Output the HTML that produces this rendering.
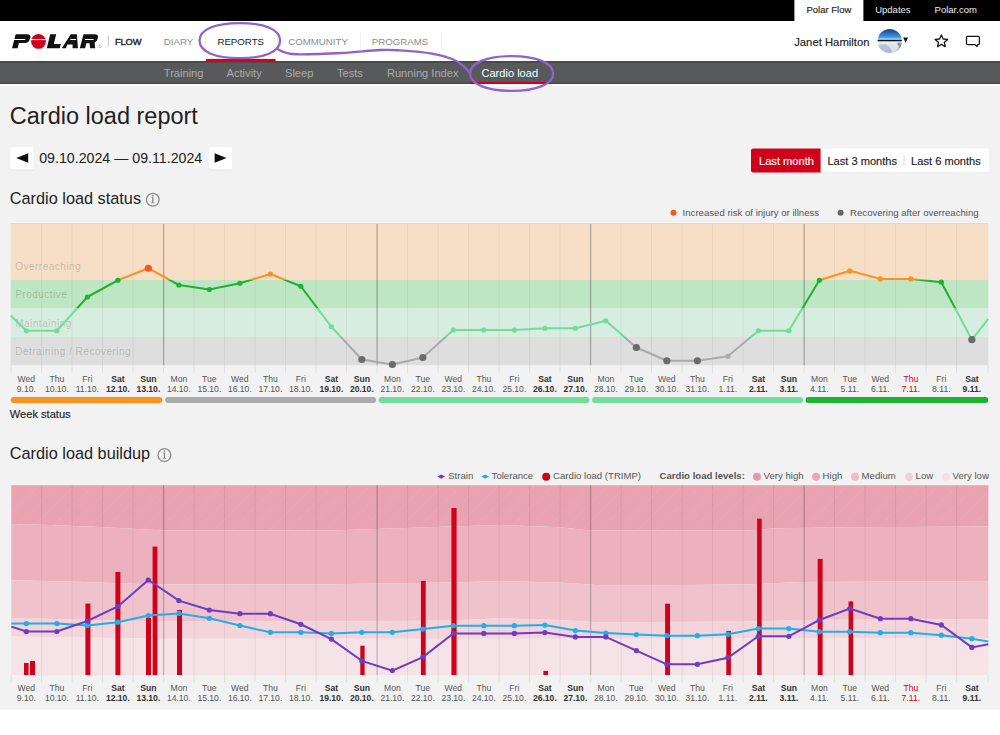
<!DOCTYPE html>
<html><head><meta charset="utf-8">
<style>
html,body{margin:0;padding:0;}
body{width:1000px;height:735px;overflow:hidden;background:#fff;}
svg{display:block;}
</style></head><body>
<svg width="1000" height="735" viewBox="0 0 1000 735" font-family="Liberation Sans, sans-serif">
<rect x="0" y="0" width="1000" height="21" fill="#000"/>
<rect x="794.4" y="0" width="69" height="21" fill="#fff"/>
<text x="806.5" y="12.8" font-size="9.5" fill="#222" font-weight="normal" text-anchor="start" stroke="#222" stroke-width="0.15" >Polar Flow</text>
<text x="875.2" y="12.8" font-size="9.5" fill="#eee" font-weight="normal" text-anchor="start" >Updates</text>
<text x="934.6" y="12.8" font-size="9.5" fill="#eee" font-weight="normal" text-anchor="start" >Polar.com</text>
<g fill="#111">
<path d="M15.7,34.3 L26.8,34.3 Q31.2,34.3 30.3,37.8 L30.1,38.6 Q29,43.1 24.6,43.1 L18.9,43.1 L17.6,48.2 L12,48.2 Z"/>
<path d="M50.2,34.3 L56.2,34.3 L53.8,43.9 L60.8,43.9 L59.8,48.2 L46.8,48.2 Z"/>
<path d="M70.8,34.3 L76.9,34.3 L77.9,48.2 L72.6,48.2 L72.6,44.4 L67.4,44.4 L65.8,48.2 L61.8,48.2 Z"/>
<path d="M83.5,34.3 L94.4,34.3 Q98.8,34.3 97.9,37.8 L97.7,38.6 Q97,41.6 94.6,42.6 L95.2,48.2 L90,48.2 L89.6,43.2 L86.3,43.2 L85.1,48.2 L79.8,48.2 Z"/>
</g>
<g fill="#fff"><rect x="13" y="39" width="12.3" height="1"/><rect x="70.3" y="39" width="5.8" height="1"/><rect x="85" y="39" width="8.6" height="1"/></g>
<circle cx="38.5" cy="41.4" r="7.4" fill="#d0021b"/>
<rect x="30" y="39" width="17" height="1.1" fill="#fff"/>
<circle cx="100.1" cy="46.4" r="1.3" fill="none" stroke="#999" stroke-width="0.6"/>
<line x1="108.3" y1="35.5" x2="108.3" y2="46.5" stroke="#c4c4c4" stroke-width="1"/>
<text x="114.9" y="44.9" font-size="9.3" fill="#2a2a2a" stroke="#2a2a2a" stroke-width="0.45" letter-spacing="-0.1">FLOW</text>
<text x="163.8" y="45.2" font-size="9.7" fill="#8c8c8c" font-weight="normal" text-anchor="start" >DIARY</text>
<text x="217.4" y="45.2" font-size="9.7" fill="#222" font-weight="normal" text-anchor="start" >REPORTS</text>
<text x="288.2" y="45.2" font-size="9.7" fill="#8c8c8c" font-weight="normal" text-anchor="start" >COMMUNITY</text>
<text x="371.8" y="45.2" font-size="9.7" fill="#8c8c8c" font-weight="normal" text-anchor="start" >PROGRAMS</text>
<rect x="205" y="33" width="1" height="17" fill="#efefef"/>
<rect x="277" y="33" width="1" height="17" fill="#efefef"/>
<rect x="359.8" y="33" width="1" height="17" fill="#efefef"/>
<rect x="440.8" y="33" width="1" height="17" fill="#efefef"/>
<rect x="206" y="58.9" width="69.6" height="2.1" fill="#d0021b"/>
<text x="794.2" y="45.8" font-size="11.3" fill="#222" font-weight="normal" text-anchor="start" stroke="#222" stroke-width="0.15" >Janet Hamilton</text>
<defs><clipPath id="av"><circle cx="889.75" cy="41" r="12.1"/></clipPath><linearGradient id="sky" x1="0" y1="28.9" x2="0" y2="40" gradientUnits="userSpaceOnUse"><stop offset="0" stop-color="#173f78"/><stop offset="0.45" stop-color="#2a74c0"/><stop offset="0.75" stop-color="#3d9ae0"/><stop offset="1" stop-color="#d8ecf8"/></linearGradient><linearGradient id="snow" x1="0" y1="41" x2="0" y2="53" gradientUnits="userSpaceOnUse"><stop offset="0" stop-color="#f2f5f9"/><stop offset="1" stop-color="#b9c6d6"/></linearGradient></defs>
<g clip-path="url(#av)"><rect x="877" y="28" width="26" height="12.5" fill="url(#sky)"/><rect x="877" y="41" width="26" height="13" fill="url(#snow)"/><path d="M877,45 L886,44 L893,50 L890,54 L877,54 Z" fill="#aab8cc" fill-opacity="0.7"/><path d="M896,43 L903,42.5 L903,54 L894,54 L899,48 Z" fill="#5f7590" fill-opacity="0.75"/><path d="M889,46 L897,42.5 L899,47 L893,53 Z" fill="#dfe6ef" fill-opacity="0.8"/><rect x="877" y="39.8" width="26" height="1.5" fill="#111"/></g>
<path d="M903.2,37.4 L908,37.4 L905.6,42.7 Z" fill="#111"/>
<path d="M941.4,34.9 L943.2,39 L947.7,39.4 L944.3,42.3 L945.3,46.7 L941.4,44.4 L937.5,46.7 L938.5,42.3 L935.1,39.4 L939.6,39 Z" fill="none" stroke="#111" stroke-width="1.3" stroke-linejoin="round"/>
<path d="M967.6,36.4 L978.3,36.4 Q979.4,36.4 979.4,37.5 L979.4,43.5 Q979.4,44.6 978.3,44.6 L977.7,44.6 L977,46.4 L974.8,44.6 L967.6,44.6 Q966.5,44.6 966.5,43.5 L966.5,37.5 Q966.5,36.4 967.6,36.4 Z" fill="none" stroke="#111" stroke-width="1.25" stroke-linejoin="round"/>
<rect x="0" y="61" width="1000" height="23" fill="#58595b"/>
<rect x="0" y="61" width="1000" height="1.8" fill="#48494a"/>
<rect x="0" y="82.8" width="1000" height="1.3" fill="#444546"/>
<text x="163.8" y="76.8" font-size="11.1" fill="#ababab" font-weight="normal" text-anchor="start" >Training</text>
<text x="226.6" y="76.8" font-size="11.1" fill="#ababab" font-weight="normal" text-anchor="start" >Activity</text>
<text x="285" y="76.8" font-size="11.1" fill="#ababab" font-weight="normal" text-anchor="start" >Sleep</text>
<text x="337" y="76.8" font-size="11.1" fill="#ababab" font-weight="normal" text-anchor="start" >Tests</text>
<text x="386.9" y="76.8" font-size="11.1" fill="#ababab" font-weight="normal" text-anchor="start" >Running Index</text>
<text x="481.4" y="76.8" font-size="11.1" fill="#fff" font-weight="normal" text-anchor="start" >Cardio load</text>
<rect x="470.4" y="81.9" width="79.2" height="2.5" fill="#d0021b"/>
<rect x="0" y="85.8" width="1000" height="623.7" fill="#f2f2f2"/>
<rect x="0" y="84.1" width="1000" height="1.7" fill="#fff"/>
<text x="9.8" y="123.8" font-size="23.5" fill="#222" font-weight="normal" text-anchor="start" >Cardio load report</text>
<rect x="10.2" y="147.8" width="23.4" height="22.6" rx="2" fill="#000" fill-opacity="0.06"/>
<rect x="10.2" y="147" width="23.4" height="22.6" rx="2" fill="#fff"/>
<rect x="209" y="147.8" width="23.4" height="22.6" rx="2" fill="#000" fill-opacity="0.06"/>
<rect x="209" y="147" width="23.4" height="22.6" rx="2" fill="#fff"/>
<path d="M16.2,158 L28.2,153.2 L28.2,162.8 Z" fill="#111"/>
<path d="M226.6,158 L214.6,153.2 L214.6,162.8 Z" fill="#111"/>
<text x="39.2" y="163.2" font-size="14.2" fill="#222" font-weight="normal" text-anchor="start" >09.10.2024 — 09.11.2024</text>
<rect x="751" y="149.4" width="238.1" height="23.9" rx="2" fill="#000" fill-opacity="0.06"/>
<rect x="751" y="148.6" width="238.1" height="23.9" rx="2" fill="#fff"/>
<path d="M753,148.6 L820.6,148.6 L820.6,172.5 L753,172.5 Q751,172.5 751,170.5 L751,150.6 Q751,148.6 753,148.6 Z" fill="#d0021b"/>
<rect x="903.5" y="155" width="1" height="11" fill="#ddd"/>
<text x="759" y="164.7" font-size="11.1" fill="#fff" font-weight="normal" text-anchor="start" stroke="#fff" stroke-width="0.15" >Last month</text>
<text x="827.4" y="164.7" font-size="11.1" fill="#222" font-weight="normal" text-anchor="start" stroke="#222" stroke-width="0.15" >Last 3 months</text>
<text x="911.1" y="164.7" font-size="11.1" fill="#222" font-weight="normal" text-anchor="start" stroke="#222" stroke-width="0.15" >Last 6 months</text>
<text x="9.8" y="204" font-size="16.3" fill="#222" font-weight="normal" text-anchor="start" >Cardio load status</text>
<g transform="translate(152.8,199.7)"><circle cx="0" cy="0" r="6.4" fill="none" stroke="#8c8c8c" stroke-width="1.3"/><circle cx="0" cy="-4" r="0.85" fill="#8c8c8c"/><path d="M-1.3,-2.5 L0.7,-2.5 L0.7,2.9 L1.6,2.9 L1.6,3.6 L-1.7,3.6 L-1.7,2.9 L-0.7,2.9 L-0.7,-1.8 L-1.3,-1.8 Z" fill="#8c8c8c"/></g>
<text x="9.8" y="417.5" font-size="11.1" fill="#222" font-weight="normal" text-anchor="start" stroke="#222" stroke-width="0.15" >Week status</text>
<text x="9.8" y="459.3" font-size="16.3" fill="#222" font-weight="normal" text-anchor="start" >Cardio load buildup</text>
<g transform="translate(164.4,455.1)"><circle cx="0" cy="0" r="6.4" fill="none" stroke="#8c8c8c" stroke-width="1.3"/><circle cx="0" cy="-4" r="0.85" fill="#8c8c8c"/><path d="M-1.3,-2.5 L0.7,-2.5 L0.7,2.9 L1.6,2.9 L1.6,3.6 L-1.7,3.6 L-1.7,2.9 L-0.7,2.9 L-0.7,-1.8 L-1.3,-1.8 Z" fill="#8c8c8c"/></g>
<circle cx="673.5" cy="212.8" r="3" fill="#f15a24"/><circle cx="840.6" cy="212.8" r="3" fill="#666"/>
<text x="682.6" y="215.9" font-size="9.6" fill="#555" font-weight="normal" text-anchor="start" >Increased risk of injury or illness</text>
<text x="850.1" y="215.9" font-size="9.6" fill="#555" font-weight="normal" text-anchor="start" >Recovering after overreaching</text>
<path d="M441.2,474.4 L445.1,476.6 L441.2,478.8 L437.3,476.6 Z" fill="#6f3cbf"/>
<path d="M485.2,474.4 L489.1,476.6 L485.2,478.8 L481.3,476.6 Z" fill="#22aee6"/>
<circle cx="546.2" cy="476.8" r="4" fill="#d0021b"/>
<circle cx="757" cy="476.8" r="4" fill="#e59aaa"/>
<circle cx="816" cy="476.8" r="4" fill="#eaa9b7"/>
<circle cx="855" cy="476.8" r="4" fill="#eebcc6"/>
<circle cx="909" cy="476.8" r="4" fill="#f1d0d7"/>
<circle cx="946" cy="476.8" r="4" fill="#f4e0e4"/>
<text x="448.2" y="478.7" font-size="9.6" fill="#555" font-weight="normal" text-anchor="start" >Strain</text>
<text x="491.6" y="478.7" font-size="9.6" fill="#555" font-weight="normal" text-anchor="start" >Tolerance</text>
<text x="553.1" y="478.7" font-size="9.6" fill="#555" font-weight="normal" text-anchor="start" >Cardio load (TRIMP)</text>
<text x="659.6" y="478.7" font-size="9.6" fill="#555" font-weight="bold" text-anchor="start" >Cardio load levels:</text>
<text x="763.6" y="478.7" font-size="9.6" fill="#555" font-weight="normal" text-anchor="start" >Very high</text>
<text x="822.6" y="478.7" font-size="9.6" fill="#555" font-weight="normal" text-anchor="start" >High</text>
<text x="861.6" y="478.7" font-size="9.6" fill="#555" font-weight="normal" text-anchor="start" >Medium</text>
<text x="915.6" y="478.7" font-size="9.6" fill="#555" font-weight="normal" text-anchor="start" >Low</text>
<text x="952.6" y="478.7" font-size="9.6" fill="#555" font-weight="normal" text-anchor="start" >Very low</text>
<defs>
<clipPath id="zo"><rect x="0" y="0" width="1000" height="280.0"/></clipPath>
<clipPath id="zp"><rect x="0" y="280.0" width="1000" height="28.5"/></clipPath>
<clipPath id="zm"><rect x="0" y="308.5" width="1000" height="28.5"/></clipPath>
<clipPath id="zd"><rect x="0" y="337.0" width="1000" height="83.0"/></clipPath>
</defs>
<rect x="10.7" y="222" width="977.5999999999999" height="1" fill="#f8f8f8"/>
<rect x="10.7" y="223" width="977.5999999999999" height="1" fill="#dbd8d2"/>
<rect x="10.7" y="224.0" width="977.5999999999999" height="56.0" fill="#f6dfc6"/>
<rect x="10.7" y="280.0" width="977.5999999999999" height="28.5" fill="#bee6c2"/>
<rect x="10.7" y="308.5" width="977.5999999999999" height="28.5" fill="#d7eddf"/>
<rect x="10.7" y="337.0" width="977.5999999999999" height="28.19999999999999" fill="#dedede"/>
<text x="15.2" y="270.1" font-size="10" fill="#000" font-weight="normal" text-anchor="start" fill-opacity="0.2" letter-spacing="0.5">Overreaching</text>
<text x="15.2" y="298.1" font-size="10" fill="#000" font-weight="normal" text-anchor="start" fill-opacity="0.2" letter-spacing="0.5">Productive</text>
<text x="15.2" y="326.6" font-size="10" fill="#000" font-weight="normal" text-anchor="start" fill-opacity="0.2" letter-spacing="0.5">Maintaining</text>
<text x="15.2" y="355.1" font-size="10" fill="#000" font-weight="normal" text-anchor="start" fill-opacity="0.2" letter-spacing="0.5">Detraining / Recovering</text>
<line x1="11.10" y1="365.2" x2="11.10" y2="372.7" stroke="#000" stroke-opacity="0.08"/>
<line x1="41.60" y1="365.2" x2="41.60" y2="372.7" stroke="#000" stroke-opacity="0.08"/>
<line x1="41.60" y1="224.0" x2="41.60" y2="365.2" stroke="#000" stroke-opacity="0.06"/>
<line x1="72.10" y1="365.2" x2="72.10" y2="372.7" stroke="#000" stroke-opacity="0.08"/>
<line x1="72.10" y1="224.0" x2="72.10" y2="365.2" stroke="#000" stroke-opacity="0.06"/>
<line x1="102.60" y1="365.2" x2="102.60" y2="372.7" stroke="#000" stroke-opacity="0.08"/>
<line x1="102.60" y1="224.0" x2="102.60" y2="365.2" stroke="#000" stroke-opacity="0.06"/>
<line x1="133.10" y1="365.2" x2="133.10" y2="372.7" stroke="#000" stroke-opacity="0.08"/>
<line x1="133.10" y1="224.0" x2="133.10" y2="365.2" stroke="#000" stroke-opacity="0.06"/>
<line x1="163.60" y1="365.2" x2="163.60" y2="372.7" stroke="#000" stroke-opacity="0.08"/>
<line x1="163.60" y1="224.0" x2="163.60" y2="365.2" stroke="#000" stroke-opacity="0.27" stroke-width="1.3"/>
<line x1="194.10" y1="365.2" x2="194.10" y2="372.7" stroke="#000" stroke-opacity="0.08"/>
<line x1="194.10" y1="224.0" x2="194.10" y2="365.2" stroke="#000" stroke-opacity="0.06"/>
<line x1="224.60" y1="365.2" x2="224.60" y2="372.7" stroke="#000" stroke-opacity="0.08"/>
<line x1="224.60" y1="224.0" x2="224.60" y2="365.2" stroke="#000" stroke-opacity="0.06"/>
<line x1="255.10" y1="365.2" x2="255.10" y2="372.7" stroke="#000" stroke-opacity="0.08"/>
<line x1="255.10" y1="224.0" x2="255.10" y2="365.2" stroke="#000" stroke-opacity="0.06"/>
<line x1="285.60" y1="365.2" x2="285.60" y2="372.7" stroke="#000" stroke-opacity="0.08"/>
<line x1="285.60" y1="224.0" x2="285.60" y2="365.2" stroke="#000" stroke-opacity="0.06"/>
<line x1="316.10" y1="365.2" x2="316.10" y2="372.7" stroke="#000" stroke-opacity="0.08"/>
<line x1="316.10" y1="224.0" x2="316.10" y2="365.2" stroke="#000" stroke-opacity="0.06"/>
<line x1="346.60" y1="365.2" x2="346.60" y2="372.7" stroke="#000" stroke-opacity="0.08"/>
<line x1="346.60" y1="224.0" x2="346.60" y2="365.2" stroke="#000" stroke-opacity="0.06"/>
<line x1="377.10" y1="365.2" x2="377.10" y2="372.7" stroke="#000" stroke-opacity="0.08"/>
<line x1="377.10" y1="224.0" x2="377.10" y2="365.2" stroke="#000" stroke-opacity="0.27" stroke-width="1.3"/>
<line x1="407.60" y1="365.2" x2="407.60" y2="372.7" stroke="#000" stroke-opacity="0.08"/>
<line x1="407.60" y1="224.0" x2="407.60" y2="365.2" stroke="#000" stroke-opacity="0.06"/>
<line x1="438.10" y1="365.2" x2="438.10" y2="372.7" stroke="#000" stroke-opacity="0.08"/>
<line x1="438.10" y1="224.0" x2="438.10" y2="365.2" stroke="#000" stroke-opacity="0.06"/>
<line x1="468.60" y1="365.2" x2="468.60" y2="372.7" stroke="#000" stroke-opacity="0.08"/>
<line x1="468.60" y1="224.0" x2="468.60" y2="365.2" stroke="#000" stroke-opacity="0.06"/>
<line x1="499.10" y1="365.2" x2="499.10" y2="372.7" stroke="#000" stroke-opacity="0.08"/>
<line x1="499.10" y1="224.0" x2="499.10" y2="365.2" stroke="#000" stroke-opacity="0.06"/>
<line x1="529.60" y1="365.2" x2="529.60" y2="372.7" stroke="#000" stroke-opacity="0.08"/>
<line x1="529.60" y1="224.0" x2="529.60" y2="365.2" stroke="#000" stroke-opacity="0.06"/>
<line x1="560.10" y1="365.2" x2="560.10" y2="372.7" stroke="#000" stroke-opacity="0.08"/>
<line x1="560.10" y1="224.0" x2="560.10" y2="365.2" stroke="#000" stroke-opacity="0.06"/>
<line x1="590.60" y1="365.2" x2="590.60" y2="372.7" stroke="#000" stroke-opacity="0.08"/>
<line x1="590.60" y1="224.0" x2="590.60" y2="365.2" stroke="#000" stroke-opacity="0.27" stroke-width="1.3"/>
<line x1="621.10" y1="365.2" x2="621.10" y2="372.7" stroke="#000" stroke-opacity="0.08"/>
<line x1="621.10" y1="224.0" x2="621.10" y2="365.2" stroke="#000" stroke-opacity="0.06"/>
<line x1="651.60" y1="365.2" x2="651.60" y2="372.7" stroke="#000" stroke-opacity="0.08"/>
<line x1="651.60" y1="224.0" x2="651.60" y2="365.2" stroke="#000" stroke-opacity="0.06"/>
<line x1="682.10" y1="365.2" x2="682.10" y2="372.7" stroke="#000" stroke-opacity="0.08"/>
<line x1="682.10" y1="224.0" x2="682.10" y2="365.2" stroke="#000" stroke-opacity="0.06"/>
<line x1="712.60" y1="365.2" x2="712.60" y2="372.7" stroke="#000" stroke-opacity="0.08"/>
<line x1="712.60" y1="224.0" x2="712.60" y2="365.2" stroke="#000" stroke-opacity="0.06"/>
<line x1="743.10" y1="365.2" x2="743.10" y2="372.7" stroke="#000" stroke-opacity="0.08"/>
<line x1="743.10" y1="224.0" x2="743.10" y2="365.2" stroke="#000" stroke-opacity="0.06"/>
<line x1="773.60" y1="365.2" x2="773.60" y2="372.7" stroke="#000" stroke-opacity="0.08"/>
<line x1="773.60" y1="224.0" x2="773.60" y2="365.2" stroke="#000" stroke-opacity="0.06"/>
<line x1="804.10" y1="365.2" x2="804.10" y2="372.7" stroke="#000" stroke-opacity="0.08"/>
<line x1="804.10" y1="224.0" x2="804.10" y2="365.2" stroke="#000" stroke-opacity="0.27" stroke-width="1.3"/>
<line x1="834.60" y1="365.2" x2="834.60" y2="372.7" stroke="#000" stroke-opacity="0.08"/>
<line x1="834.60" y1="224.0" x2="834.60" y2="365.2" stroke="#000" stroke-opacity="0.06"/>
<line x1="865.10" y1="365.2" x2="865.10" y2="372.7" stroke="#000" stroke-opacity="0.08"/>
<line x1="865.10" y1="224.0" x2="865.10" y2="365.2" stroke="#000" stroke-opacity="0.06"/>
<line x1="895.60" y1="365.2" x2="895.60" y2="372.7" stroke="#000" stroke-opacity="0.08"/>
<line x1="895.60" y1="224.0" x2="895.60" y2="365.2" stroke="#000" stroke-opacity="0.06"/>
<line x1="926.10" y1="365.2" x2="926.10" y2="372.7" stroke="#000" stroke-opacity="0.08"/>
<line x1="926.10" y1="224.0" x2="926.10" y2="365.2" stroke="#000" stroke-opacity="0.06"/>
<line x1="956.60" y1="365.2" x2="956.60" y2="372.7" stroke="#000" stroke-opacity="0.08"/>
<line x1="956.60" y1="224.0" x2="956.60" y2="365.2" stroke="#000" stroke-opacity="0.06"/>
<line x1="988.10" y1="365.2" x2="988.10" y2="372.7" stroke="#000" stroke-opacity="0.08"/>
<polyline points="10.70,315.50 26.35,330.75 56.85,330.75 87.35,297.00 117.85,280.25 148.35,268.25 178.85,285.00 209.35,289.50 239.85,283.25 270.35,274.00 300.85,286.25 331.35,326.75 361.85,359.50 392.35,364.50 422.85,357.50 453.35,330.00 483.85,330.00 514.35,330.00 544.85,328.25 575.35,328.25 605.85,320.75 636.35,347.50 666.85,360.75 697.35,360.75 727.85,356.25 758.35,330.75 788.85,330.75 819.35,280.30 849.85,270.80 880.35,278.90 910.85,278.90 941.35,282.20 971.85,339.70 988.30,318.80" fill="none" stroke="#f7931e" stroke-width="2" stroke-linejoin="round" clip-path="url(#zo)"/>
<polyline points="10.70,315.50 26.35,330.75 56.85,330.75 87.35,297.00 117.85,280.25 148.35,268.25 178.85,285.00 209.35,289.50 239.85,283.25 270.35,274.00 300.85,286.25 331.35,326.75 361.85,359.50 392.35,364.50 422.85,357.50 453.35,330.00 483.85,330.00 514.35,330.00 544.85,328.25 575.35,328.25 605.85,320.75 636.35,347.50 666.85,360.75 697.35,360.75 727.85,356.25 758.35,330.75 788.85,330.75 819.35,280.30 849.85,270.80 880.35,278.90 910.85,278.90 941.35,282.20 971.85,339.70 988.30,318.80" fill="none" stroke="#1fb131" stroke-width="2" stroke-linejoin="round" clip-path="url(#zp)"/>
<polyline points="10.70,315.50 26.35,330.75 56.85,330.75 87.35,297.00 117.85,280.25 148.35,268.25 178.85,285.00 209.35,289.50 239.85,283.25 270.35,274.00 300.85,286.25 331.35,326.75 361.85,359.50 392.35,364.50 422.85,357.50 453.35,330.00 483.85,330.00 514.35,330.00 544.85,328.25 575.35,328.25 605.85,320.75 636.35,347.50 666.85,360.75 697.35,360.75 727.85,356.25 758.35,330.75 788.85,330.75 819.35,280.30 849.85,270.80 880.35,278.90 910.85,278.90 941.35,282.20 971.85,339.70 988.30,318.80" fill="none" stroke="#71dc9d" stroke-width="2" stroke-linejoin="round" clip-path="url(#zm)"/>
<polyline points="10.70,315.50 26.35,330.75 56.85,330.75 87.35,297.00 117.85,280.25 148.35,268.25 178.85,285.00 209.35,289.50 239.85,283.25 270.35,274.00 300.85,286.25 331.35,326.75 361.85,359.50 392.35,364.50 422.85,357.50 453.35,330.00 483.85,330.00 514.35,330.00 544.85,328.25 575.35,328.25 605.85,320.75 636.35,347.50 666.85,360.75 697.35,360.75 727.85,356.25 758.35,330.75 788.85,330.75 819.35,280.30 849.85,270.80 880.35,278.90 910.85,278.90 941.35,282.20 971.85,339.70 988.30,318.80" fill="none" stroke="#aaaaaa" stroke-width="2" stroke-linejoin="round" clip-path="url(#zd)"/>
<circle cx="26.35" cy="330.75" r="2.6" fill="#71dc9d"/>
<circle cx="56.85" cy="330.75" r="2.6" fill="#71dc9d"/>
<circle cx="87.35" cy="297" r="2.6" fill="#1fb131"/>
<circle cx="117.85" cy="280.25" r="2.6" fill="#1fb131"/>
<circle cx="148.35" cy="268.25" r="3.6" fill="#f15a24"/>
<circle cx="178.85" cy="285" r="2.6" fill="#1fb131"/>
<circle cx="209.35" cy="289.5" r="2.6" fill="#1fb131"/>
<circle cx="239.85" cy="283.25" r="2.6" fill="#1fb131"/>
<circle cx="270.35" cy="274" r="2.6" fill="#f7931e"/>
<circle cx="300.85" cy="286.25" r="2.6" fill="#1fb131"/>
<circle cx="331.35" cy="326.75" r="2.6" fill="#71dc9d"/>
<circle cx="361.85" cy="359.5" r="3.6" fill="#6b6b6b"/>
<circle cx="392.35" cy="364.5" r="3.6" fill="#6b6b6b"/>
<circle cx="422.85" cy="357.5" r="3.6" fill="#6b6b6b"/>
<circle cx="453.35" cy="330" r="2.6" fill="#71dc9d"/>
<circle cx="483.85" cy="330" r="2.6" fill="#71dc9d"/>
<circle cx="514.35" cy="330" r="2.6" fill="#71dc9d"/>
<circle cx="544.85" cy="328.25" r="2.6" fill="#71dc9d"/>
<circle cx="575.35" cy="328.25" r="2.6" fill="#71dc9d"/>
<circle cx="605.85" cy="320.75" r="2.6" fill="#71dc9d"/>
<circle cx="636.35" cy="347.5" r="3.6" fill="#6b6b6b"/>
<circle cx="666.85" cy="360.75" r="3.6" fill="#6b6b6b"/>
<circle cx="697.35" cy="360.75" r="3.6" fill="#6b6b6b"/>
<circle cx="727.85" cy="356.25" r="2.6" fill="#aaaaaa"/>
<circle cx="758.35" cy="330.75" r="2.6" fill="#71dc9d"/>
<circle cx="788.85" cy="330.75" r="2.6" fill="#71dc9d"/>
<circle cx="819.35" cy="280.3" r="2.6" fill="#1fb131"/>
<circle cx="849.85" cy="270.8" r="2.6" fill="#f7931e"/>
<circle cx="880.35" cy="278.9" r="2.6" fill="#f7931e"/>
<circle cx="910.85" cy="278.9" r="2.6" fill="#f7931e"/>
<circle cx="941.35" cy="282.2" r="2.6" fill="#1fb131"/>
<circle cx="971.85" cy="339.7" r="3.6" fill="#6b6b6b"/>
<text x="26.35" y="381.5" font-size="8.6" fill="#555" font-weight="normal" text-anchor="middle" >Wed</text>
<text x="26.35" y="391.8" font-size="8.6" fill="#555" font-weight="normal" text-anchor="middle" >9.10.</text>
<text x="56.85" y="381.5" font-size="8.6" fill="#555" font-weight="normal" text-anchor="middle" >Thu</text>
<text x="56.85" y="391.8" font-size="8.6" fill="#555" font-weight="normal" text-anchor="middle" >10.10.</text>
<text x="87.35" y="381.5" font-size="8.6" fill="#555" font-weight="normal" text-anchor="middle" >Fri</text>
<text x="87.35" y="391.8" font-size="8.6" fill="#555" font-weight="normal" text-anchor="middle" >11.10.</text>
<text x="117.85" y="381.5" font-size="8.6" fill="#333" font-weight="bold" text-anchor="middle" >Sat</text>
<text x="117.85" y="391.8" font-size="8.6" fill="#333" font-weight="bold" text-anchor="middle" >12.10.</text>
<text x="148.35" y="381.5" font-size="8.6" fill="#333" font-weight="bold" text-anchor="middle" >Sun</text>
<text x="148.35" y="391.8" font-size="8.6" fill="#333" font-weight="bold" text-anchor="middle" >13.10.</text>
<text x="178.85" y="381.5" font-size="8.6" fill="#555" font-weight="normal" text-anchor="middle" >Mon</text>
<text x="178.85" y="391.8" font-size="8.6" fill="#555" font-weight="normal" text-anchor="middle" >14.10.</text>
<text x="209.35" y="381.5" font-size="8.6" fill="#555" font-weight="normal" text-anchor="middle" >Tue</text>
<text x="209.35" y="391.8" font-size="8.6" fill="#555" font-weight="normal" text-anchor="middle" >15.10.</text>
<text x="239.85" y="381.5" font-size="8.6" fill="#555" font-weight="normal" text-anchor="middle" >Wed</text>
<text x="239.85" y="391.8" font-size="8.6" fill="#555" font-weight="normal" text-anchor="middle" >16.10.</text>
<text x="270.35" y="381.5" font-size="8.6" fill="#555" font-weight="normal" text-anchor="middle" >Thu</text>
<text x="270.35" y="391.8" font-size="8.6" fill="#555" font-weight="normal" text-anchor="middle" >17.10.</text>
<text x="300.85" y="381.5" font-size="8.6" fill="#555" font-weight="normal" text-anchor="middle" >Fri</text>
<text x="300.85" y="391.8" font-size="8.6" fill="#555" font-weight="normal" text-anchor="middle" >18.10.</text>
<text x="331.35" y="381.5" font-size="8.6" fill="#333" font-weight="bold" text-anchor="middle" >Sat</text>
<text x="331.35" y="391.8" font-size="8.6" fill="#333" font-weight="bold" text-anchor="middle" >19.10.</text>
<text x="361.85" y="381.5" font-size="8.6" fill="#333" font-weight="bold" text-anchor="middle" >Sun</text>
<text x="361.85" y="391.8" font-size="8.6" fill="#333" font-weight="bold" text-anchor="middle" >20.10.</text>
<text x="392.35" y="381.5" font-size="8.6" fill="#555" font-weight="normal" text-anchor="middle" >Mon</text>
<text x="392.35" y="391.8" font-size="8.6" fill="#555" font-weight="normal" text-anchor="middle" >21.10.</text>
<text x="422.85" y="381.5" font-size="8.6" fill="#555" font-weight="normal" text-anchor="middle" >Tue</text>
<text x="422.85" y="391.8" font-size="8.6" fill="#555" font-weight="normal" text-anchor="middle" >22.10.</text>
<text x="453.35" y="381.5" font-size="8.6" fill="#555" font-weight="normal" text-anchor="middle" >Wed</text>
<text x="453.35" y="391.8" font-size="8.6" fill="#555" font-weight="normal" text-anchor="middle" >23.10.</text>
<text x="483.85" y="381.5" font-size="8.6" fill="#555" font-weight="normal" text-anchor="middle" >Thu</text>
<text x="483.85" y="391.8" font-size="8.6" fill="#555" font-weight="normal" text-anchor="middle" >24.10.</text>
<text x="514.35" y="381.5" font-size="8.6" fill="#555" font-weight="normal" text-anchor="middle" >Fri</text>
<text x="514.35" y="391.8" font-size="8.6" fill="#555" font-weight="normal" text-anchor="middle" >25.10.</text>
<text x="544.85" y="381.5" font-size="8.6" fill="#333" font-weight="bold" text-anchor="middle" >Sat</text>
<text x="544.85" y="391.8" font-size="8.6" fill="#333" font-weight="bold" text-anchor="middle" >26.10.</text>
<text x="575.35" y="381.5" font-size="8.6" fill="#333" font-weight="bold" text-anchor="middle" >Sun</text>
<text x="575.35" y="391.8" font-size="8.6" fill="#333" font-weight="bold" text-anchor="middle" >27.10.</text>
<text x="605.85" y="381.5" font-size="8.6" fill="#555" font-weight="normal" text-anchor="middle" >Mon</text>
<text x="605.85" y="391.8" font-size="8.6" fill="#555" font-weight="normal" text-anchor="middle" >28.10.</text>
<text x="636.35" y="381.5" font-size="8.6" fill="#555" font-weight="normal" text-anchor="middle" >Tue</text>
<text x="636.35" y="391.8" font-size="8.6" fill="#555" font-weight="normal" text-anchor="middle" >29.10.</text>
<text x="666.85" y="381.5" font-size="8.6" fill="#555" font-weight="normal" text-anchor="middle" >Wed</text>
<text x="666.85" y="391.8" font-size="8.6" fill="#555" font-weight="normal" text-anchor="middle" >30.10.</text>
<text x="697.35" y="381.5" font-size="8.6" fill="#555" font-weight="normal" text-anchor="middle" >Thu</text>
<text x="697.35" y="391.8" font-size="8.6" fill="#555" font-weight="normal" text-anchor="middle" >31.10.</text>
<text x="727.85" y="381.5" font-size="8.6" fill="#555" font-weight="normal" text-anchor="middle" >Fri</text>
<text x="727.85" y="391.8" font-size="8.6" fill="#555" font-weight="normal" text-anchor="middle" >1.11.</text>
<text x="758.35" y="381.5" font-size="8.6" fill="#333" font-weight="bold" text-anchor="middle" >Sat</text>
<text x="758.35" y="391.8" font-size="8.6" fill="#333" font-weight="bold" text-anchor="middle" >2.11.</text>
<text x="788.85" y="381.5" font-size="8.6" fill="#333" font-weight="bold" text-anchor="middle" >Sun</text>
<text x="788.85" y="391.8" font-size="8.6" fill="#333" font-weight="bold" text-anchor="middle" >3.11.</text>
<text x="819.35" y="381.5" font-size="8.6" fill="#555" font-weight="normal" text-anchor="middle" >Mon</text>
<text x="819.35" y="391.8" font-size="8.6" fill="#555" font-weight="normal" text-anchor="middle" >4.11.</text>
<text x="849.85" y="381.5" font-size="8.6" fill="#555" font-weight="normal" text-anchor="middle" >Tue</text>
<text x="849.85" y="391.8" font-size="8.6" fill="#555" font-weight="normal" text-anchor="middle" >5.11.</text>
<text x="880.35" y="381.5" font-size="8.6" fill="#555" font-weight="normal" text-anchor="middle" >Wed</text>
<text x="880.35" y="391.8" font-size="8.6" fill="#555" font-weight="normal" text-anchor="middle" >6.11.</text>
<text x="910.85" y="381.5" font-size="8.6" fill="#d0021b" font-weight="normal" text-anchor="middle" >Thu</text>
<text x="910.85" y="391.8" font-size="8.6" fill="#d0021b" font-weight="normal" text-anchor="middle" >7.11.</text>
<text x="941.35" y="381.5" font-size="8.6" fill="#555" font-weight="normal" text-anchor="middle" >Fri</text>
<text x="941.35" y="391.8" font-size="8.6" fill="#555" font-weight="normal" text-anchor="middle" >8.11.</text>
<text x="971.85" y="381.5" font-size="8.6" fill="#333" font-weight="bold" text-anchor="middle" >Sat</text>
<text x="971.85" y="391.8" font-size="8.6" fill="#333" font-weight="bold" text-anchor="middle" >9.11.</text>
<rect x="10.70" y="397" width="151.60" height="6" rx="3" fill="#f7931e"/>
<rect x="165.10" y="397" width="211.00" height="6" rx="3" fill="#aaaaaa"/>
<rect x="378.60" y="397" width="211.00" height="6" rx="3" fill="#71dc9d"/>
<rect x="592.10" y="397" width="211.00" height="6" rx="3" fill="#71dc9d"/>
<rect x="805.60" y="397" width="182.70" height="6" rx="3" fill="#1fb131"/>
<path d="M11.3,485.2 L988.4,485.2 L988.3,526.5 L850.0,527.2 L775.0,528.2 L750.0,530.5 L590.0,530.5 L560.0,527.2 L500.0,524.9 L450.0,526.5 L330.0,530.5 L165.0,530.5 L100.0,527.0 L50.0,524.9 L11.3,523.9 Z" fill="#e8a2b0"/>
<path d="M11.3,523.9 L50.0,524.9 L100.0,527.0 L165.0,530.5 L330.0,530.5 L450.0,526.5 L500.0,524.9 L560.0,527.2 L590.0,530.5 L750.0,530.5 L775.0,528.2 L850.0,527.2 L988.3,526.5 L988.3,581.0 L800.0,582.0 L750.0,584.3 L660.0,585.2 L600.0,585.2 L560.0,582.6 L500.0,581.0 L450.0,582.6 L330.0,584.3 L150.0,584.3 L70.0,581.6 L11.3,580.3 Z" fill="#ecb1bd"/>
<path d="M11.3,580.3 L70.0,581.6 L150.0,584.3 L330.0,584.3 L450.0,582.6 L500.0,581.0 L560.0,582.6 L600.0,585.2 L660.0,585.2 L750.0,584.3 L800.0,582.0 L988.3,581.0 L988.3,619.0 L800.0,620.0 L750.0,621.5 L600.0,622.2 L560.0,619.9 L500.0,618.2 L450.0,620.6 L330.0,621.5 L165.0,621.5 L100.0,619.9 L11.3,617.9 Z" fill="#f0c3cc"/>
<path d="M11.3,617.9 L100.0,619.9 L165.0,621.5 L330.0,621.5 L450.0,620.6 L500.0,618.2 L560.0,619.9 L600.0,622.2 L750.0,621.5 L800.0,620.0 L988.3,619.0 L988.3,638.0 L660.0,638.7 L165.0,638.7 L11.3,636.4 Z" fill="#f3d4db"/>
<path d="M11.3,636.4 L165.0,638.7 L660.0,638.7 L988.3,638.0 L988.4,675.0 L11.3,675.0 Z" fill="#f5e3e7"/>
<defs><pattern id="hatch" patternUnits="userSpaceOnUse" width="13" height="13" patternTransform="rotate(-45)"><line x1="0" y1="6.5" x2="13" y2="6.5" stroke="#fff" stroke-opacity="0.1" stroke-width="1" stroke-dasharray="1 1"/></pattern></defs>
<path d="M11.3,485.2 L988.4,485.2 L988.3,526.5 L850.0,527.2 L775.0,528.2 L750.0,530.5 L590.0,530.5 L560.0,527.2 L500.0,524.9 L450.0,526.5 L330.0,530.5 L165.0,530.5 L100.0,527.0 L50.0,524.9 L11.3,523.9 Z" fill="url(#hatch)"/>
<line x1="11.10" y1="675.0" x2="11.10" y2="682.5" stroke="#000" stroke-opacity="0.08"/>
<line x1="41.60" y1="675.0" x2="41.60" y2="682.5" stroke="#000" stroke-opacity="0.08"/>
<line x1="41.60" y1="485.2" x2="41.60" y2="675.0" stroke="#000" stroke-opacity="0.065"/>
<line x1="72.10" y1="675.0" x2="72.10" y2="682.5" stroke="#000" stroke-opacity="0.08"/>
<line x1="72.10" y1="485.2" x2="72.10" y2="675.0" stroke="#000" stroke-opacity="0.065"/>
<line x1="102.60" y1="675.0" x2="102.60" y2="682.5" stroke="#000" stroke-opacity="0.08"/>
<line x1="102.60" y1="485.2" x2="102.60" y2="675.0" stroke="#000" stroke-opacity="0.065"/>
<line x1="133.10" y1="675.0" x2="133.10" y2="682.5" stroke="#000" stroke-opacity="0.08"/>
<line x1="133.10" y1="485.2" x2="133.10" y2="675.0" stroke="#000" stroke-opacity="0.065"/>
<line x1="163.60" y1="675.0" x2="163.60" y2="682.5" stroke="#000" stroke-opacity="0.08"/>
<line x1="163.60" y1="485.2" x2="163.60" y2="675.0" stroke="#000" stroke-opacity="0.22" stroke-width="1.3"/>
<line x1="194.10" y1="675.0" x2="194.10" y2="682.5" stroke="#000" stroke-opacity="0.08"/>
<line x1="194.10" y1="485.2" x2="194.10" y2="675.0" stroke="#000" stroke-opacity="0.065"/>
<line x1="224.60" y1="675.0" x2="224.60" y2="682.5" stroke="#000" stroke-opacity="0.08"/>
<line x1="224.60" y1="485.2" x2="224.60" y2="675.0" stroke="#000" stroke-opacity="0.065"/>
<line x1="255.10" y1="675.0" x2="255.10" y2="682.5" stroke="#000" stroke-opacity="0.08"/>
<line x1="255.10" y1="485.2" x2="255.10" y2="675.0" stroke="#000" stroke-opacity="0.065"/>
<line x1="285.60" y1="675.0" x2="285.60" y2="682.5" stroke="#000" stroke-opacity="0.08"/>
<line x1="285.60" y1="485.2" x2="285.60" y2="675.0" stroke="#000" stroke-opacity="0.065"/>
<line x1="316.10" y1="675.0" x2="316.10" y2="682.5" stroke="#000" stroke-opacity="0.08"/>
<line x1="316.10" y1="485.2" x2="316.10" y2="675.0" stroke="#000" stroke-opacity="0.065"/>
<line x1="346.60" y1="675.0" x2="346.60" y2="682.5" stroke="#000" stroke-opacity="0.08"/>
<line x1="346.60" y1="485.2" x2="346.60" y2="675.0" stroke="#000" stroke-opacity="0.065"/>
<line x1="377.10" y1="675.0" x2="377.10" y2="682.5" stroke="#000" stroke-opacity="0.08"/>
<line x1="377.10" y1="485.2" x2="377.10" y2="675.0" stroke="#000" stroke-opacity="0.22" stroke-width="1.3"/>
<line x1="407.60" y1="675.0" x2="407.60" y2="682.5" stroke="#000" stroke-opacity="0.08"/>
<line x1="407.60" y1="485.2" x2="407.60" y2="675.0" stroke="#000" stroke-opacity="0.065"/>
<line x1="438.10" y1="675.0" x2="438.10" y2="682.5" stroke="#000" stroke-opacity="0.08"/>
<line x1="438.10" y1="485.2" x2="438.10" y2="675.0" stroke="#000" stroke-opacity="0.065"/>
<line x1="468.60" y1="675.0" x2="468.60" y2="682.5" stroke="#000" stroke-opacity="0.08"/>
<line x1="468.60" y1="485.2" x2="468.60" y2="675.0" stroke="#000" stroke-opacity="0.065"/>
<line x1="499.10" y1="675.0" x2="499.10" y2="682.5" stroke="#000" stroke-opacity="0.08"/>
<line x1="499.10" y1="485.2" x2="499.10" y2="675.0" stroke="#000" stroke-opacity="0.065"/>
<line x1="529.60" y1="675.0" x2="529.60" y2="682.5" stroke="#000" stroke-opacity="0.08"/>
<line x1="529.60" y1="485.2" x2="529.60" y2="675.0" stroke="#000" stroke-opacity="0.065"/>
<line x1="560.10" y1="675.0" x2="560.10" y2="682.5" stroke="#000" stroke-opacity="0.08"/>
<line x1="560.10" y1="485.2" x2="560.10" y2="675.0" stroke="#000" stroke-opacity="0.065"/>
<line x1="590.60" y1="675.0" x2="590.60" y2="682.5" stroke="#000" stroke-opacity="0.08"/>
<line x1="590.60" y1="485.2" x2="590.60" y2="675.0" stroke="#000" stroke-opacity="0.22" stroke-width="1.3"/>
<line x1="621.10" y1="675.0" x2="621.10" y2="682.5" stroke="#000" stroke-opacity="0.08"/>
<line x1="621.10" y1="485.2" x2="621.10" y2="675.0" stroke="#000" stroke-opacity="0.065"/>
<line x1="651.60" y1="675.0" x2="651.60" y2="682.5" stroke="#000" stroke-opacity="0.08"/>
<line x1="651.60" y1="485.2" x2="651.60" y2="675.0" stroke="#000" stroke-opacity="0.065"/>
<line x1="682.10" y1="675.0" x2="682.10" y2="682.5" stroke="#000" stroke-opacity="0.08"/>
<line x1="682.10" y1="485.2" x2="682.10" y2="675.0" stroke="#000" stroke-opacity="0.065"/>
<line x1="712.60" y1="675.0" x2="712.60" y2="682.5" stroke="#000" stroke-opacity="0.08"/>
<line x1="712.60" y1="485.2" x2="712.60" y2="675.0" stroke="#000" stroke-opacity="0.065"/>
<line x1="743.10" y1="675.0" x2="743.10" y2="682.5" stroke="#000" stroke-opacity="0.08"/>
<line x1="743.10" y1="485.2" x2="743.10" y2="675.0" stroke="#000" stroke-opacity="0.065"/>
<line x1="773.60" y1="675.0" x2="773.60" y2="682.5" stroke="#000" stroke-opacity="0.08"/>
<line x1="773.60" y1="485.2" x2="773.60" y2="675.0" stroke="#000" stroke-opacity="0.065"/>
<line x1="804.10" y1="675.0" x2="804.10" y2="682.5" stroke="#000" stroke-opacity="0.08"/>
<line x1="804.10" y1="485.2" x2="804.10" y2="675.0" stroke="#000" stroke-opacity="0.22" stroke-width="1.3"/>
<line x1="834.60" y1="675.0" x2="834.60" y2="682.5" stroke="#000" stroke-opacity="0.08"/>
<line x1="834.60" y1="485.2" x2="834.60" y2="675.0" stroke="#000" stroke-opacity="0.065"/>
<line x1="865.10" y1="675.0" x2="865.10" y2="682.5" stroke="#000" stroke-opacity="0.08"/>
<line x1="865.10" y1="485.2" x2="865.10" y2="675.0" stroke="#000" stroke-opacity="0.065"/>
<line x1="895.60" y1="675.0" x2="895.60" y2="682.5" stroke="#000" stroke-opacity="0.08"/>
<line x1="895.60" y1="485.2" x2="895.60" y2="675.0" stroke="#000" stroke-opacity="0.065"/>
<line x1="926.10" y1="675.0" x2="926.10" y2="682.5" stroke="#000" stroke-opacity="0.08"/>
<line x1="926.10" y1="485.2" x2="926.10" y2="675.0" stroke="#000" stroke-opacity="0.065"/>
<line x1="956.60" y1="675.0" x2="956.60" y2="682.5" stroke="#000" stroke-opacity="0.08"/>
<line x1="956.60" y1="485.2" x2="956.60" y2="675.0" stroke="#000" stroke-opacity="0.065"/>
<line x1="988.10" y1="675.0" x2="988.10" y2="682.5" stroke="#000" stroke-opacity="0.08"/>
<rect x="24" y="663" width="4.60" height="12.00" fill="#d0021b"/>
<rect x="30" y="661" width="5.00" height="14.00" fill="#d0021b"/>
<rect x="85.4" y="603.6" width="5.00" height="71.40" fill="#d0021b"/>
<rect x="115.4" y="572" width="5.00" height="103.00" fill="#d0021b"/>
<rect x="146" y="618" width="5.00" height="57.00" fill="#d0021b"/>
<rect x="152.6" y="546.6" width="4.80" height="128.40" fill="#d0021b"/>
<rect x="177" y="610" width="5.00" height="65.00" fill="#d0021b"/>
<rect x="360.3" y="645.7" width="4.30" height="29.30" fill="#d0021b"/>
<rect x="420.9" y="580.9" width="4.80" height="94.10" fill="#d0021b"/>
<rect x="451.4" y="508" width="5.20" height="167.00" fill="#d0021b"/>
<rect x="543.4" y="670.9" width="4.60" height="4.10" fill="#d0021b"/>
<rect x="665.1" y="603.7" width="4.90" height="71.30" fill="#d0021b"/>
<rect x="726.3" y="630.9" width="4.60" height="44.10" fill="#d0021b"/>
<rect x="757.1" y="518.6" width="4.60" height="156.40" fill="#d0021b"/>
<rect x="817.7" y="558.9" width="4.90" height="116.10" fill="#d0021b"/>
<rect x="848.6" y="601.4" width="4.50" height="73.60" fill="#d0021b"/>
<polyline points="11.30,623.60 26.35,623.60 56.85,623.60 87.35,625.40 117.85,622.20 148.35,615.60 178.85,613.40 209.35,618.30 239.85,625.50 270.35,632.30 300.85,632.30 331.35,633.40 361.85,632.30 392.35,632.30 422.85,629.10 453.35,625.70 483.85,625.70 514.35,625.70 544.85,625.10 575.35,630.60 605.85,633.10 636.35,634.60 666.85,635.70 697.35,635.70 727.85,634.30 758.35,628.60 788.85,628.60 819.35,631.70 849.85,631.70 880.35,632.70 910.85,632.70 941.35,635.20 971.85,638.70 988.30,641.50" fill="none" stroke="#22aee6" stroke-width="2"/>
<circle cx="26.35" cy="623.6" r="2.6" fill="#22aee6"/>
<circle cx="56.85" cy="623.6" r="2.6" fill="#22aee6"/>
<circle cx="87.35" cy="625.4" r="2.6" fill="#22aee6"/>
<circle cx="117.85" cy="622.2" r="2.6" fill="#22aee6"/>
<circle cx="148.35" cy="615.6" r="2.6" fill="#22aee6"/>
<circle cx="178.85" cy="613.4" r="2.6" fill="#22aee6"/>
<circle cx="209.35" cy="618.3" r="2.6" fill="#22aee6"/>
<circle cx="239.85" cy="625.5" r="2.6" fill="#22aee6"/>
<circle cx="270.35" cy="632.3" r="2.6" fill="#22aee6"/>
<circle cx="300.85" cy="632.3" r="2.6" fill="#22aee6"/>
<circle cx="331.35" cy="633.4" r="2.6" fill="#22aee6"/>
<circle cx="361.85" cy="632.3" r="2.6" fill="#22aee6"/>
<circle cx="392.35" cy="632.3" r="2.6" fill="#22aee6"/>
<circle cx="422.85" cy="629.1" r="2.6" fill="#22aee6"/>
<circle cx="453.35" cy="625.7" r="2.6" fill="#22aee6"/>
<circle cx="483.85" cy="625.7" r="2.6" fill="#22aee6"/>
<circle cx="514.35" cy="625.7" r="2.6" fill="#22aee6"/>
<circle cx="544.85" cy="625.1" r="2.6" fill="#22aee6"/>
<circle cx="575.35" cy="630.6" r="2.6" fill="#22aee6"/>
<circle cx="605.85" cy="633.1" r="2.6" fill="#22aee6"/>
<circle cx="636.35" cy="634.6" r="2.6" fill="#22aee6"/>
<circle cx="666.85" cy="635.7" r="2.6" fill="#22aee6"/>
<circle cx="697.35" cy="635.7" r="2.6" fill="#22aee6"/>
<circle cx="727.85" cy="634.3" r="2.6" fill="#22aee6"/>
<circle cx="758.35" cy="628.6" r="2.6" fill="#22aee6"/>
<circle cx="788.85" cy="628.6" r="2.6" fill="#22aee6"/>
<circle cx="819.35" cy="631.7" r="2.6" fill="#22aee6"/>
<circle cx="849.85" cy="631.7" r="2.6" fill="#22aee6"/>
<circle cx="880.35" cy="632.7" r="2.6" fill="#22aee6"/>
<circle cx="910.85" cy="632.7" r="2.6" fill="#22aee6"/>
<circle cx="941.35" cy="635.2" r="2.6" fill="#22aee6"/>
<circle cx="971.85" cy="638.7" r="2.6" fill="#22aee6"/>
<polyline points="11.30,626.60 26.35,631.50 56.85,631.50 87.35,621.00 117.85,606.40 148.35,580.00 178.85,600.60 209.35,610.00 239.85,613.70 270.35,613.70 300.85,624.30 331.35,639.10 361.85,660.90 392.35,670.60 422.85,657.10 453.35,633.40 483.85,633.40 514.35,633.40 544.85,632.60 575.35,636.90 605.85,636.90 636.35,650.60 666.85,664.30 697.35,664.30 727.85,657.70 758.35,636.30 788.85,636.30 819.35,620.00 849.85,608.50 880.35,618.70 910.85,618.70 941.35,624.90 971.85,647.40 988.30,644.30" fill="none" stroke="#6f3cbf" stroke-width="2"/>
<circle cx="26.35" cy="631.5" r="2.6" fill="#6f3cbf"/>
<circle cx="56.85" cy="631.5" r="2.6" fill="#6f3cbf"/>
<circle cx="87.35" cy="621" r="2.6" fill="#6f3cbf"/>
<circle cx="117.85" cy="606.4" r="2.6" fill="#6f3cbf"/>
<circle cx="148.35" cy="580" r="2.6" fill="#6f3cbf"/>
<circle cx="178.85" cy="600.6" r="2.6" fill="#6f3cbf"/>
<circle cx="209.35" cy="610" r="2.6" fill="#6f3cbf"/>
<circle cx="239.85" cy="613.7" r="2.6" fill="#6f3cbf"/>
<circle cx="270.35" cy="613.7" r="2.6" fill="#6f3cbf"/>
<circle cx="300.85" cy="624.3" r="2.6" fill="#6f3cbf"/>
<circle cx="331.35" cy="639.1" r="2.6" fill="#6f3cbf"/>
<circle cx="361.85" cy="660.9" r="2.6" fill="#6f3cbf"/>
<circle cx="392.35" cy="670.6" r="2.6" fill="#6f3cbf"/>
<circle cx="422.85" cy="657.1" r="2.6" fill="#6f3cbf"/>
<circle cx="453.35" cy="633.4" r="2.6" fill="#6f3cbf"/>
<circle cx="483.85" cy="633.4" r="2.6" fill="#6f3cbf"/>
<circle cx="514.35" cy="633.4" r="2.6" fill="#6f3cbf"/>
<circle cx="544.85" cy="632.6" r="2.6" fill="#6f3cbf"/>
<circle cx="575.35" cy="636.9" r="2.6" fill="#6f3cbf"/>
<circle cx="605.85" cy="636.9" r="2.6" fill="#6f3cbf"/>
<circle cx="636.35" cy="650.6" r="2.6" fill="#6f3cbf"/>
<circle cx="666.85" cy="664.3" r="2.6" fill="#6f3cbf"/>
<circle cx="697.35" cy="664.3" r="2.6" fill="#6f3cbf"/>
<circle cx="727.85" cy="657.7" r="2.6" fill="#6f3cbf"/>
<circle cx="758.35" cy="636.3" r="2.6" fill="#6f3cbf"/>
<circle cx="788.85" cy="636.3" r="2.6" fill="#6f3cbf"/>
<circle cx="819.35" cy="620" r="2.6" fill="#6f3cbf"/>
<circle cx="849.85" cy="608.5" r="2.6" fill="#6f3cbf"/>
<circle cx="880.35" cy="618.7" r="2.6" fill="#6f3cbf"/>
<circle cx="910.85" cy="618.7" r="2.6" fill="#6f3cbf"/>
<circle cx="941.35" cy="624.9" r="2.6" fill="#6f3cbf"/>
<circle cx="971.85" cy="647.4" r="2.6" fill="#6f3cbf"/>
<text x="26.35" y="690.9" font-size="8.6" fill="#555" font-weight="normal" text-anchor="middle" >Wed</text>
<text x="26.35" y="700.9" font-size="8.6" fill="#555" font-weight="normal" text-anchor="middle" >9.10.</text>
<text x="56.85" y="690.9" font-size="8.6" fill="#555" font-weight="normal" text-anchor="middle" >Thu</text>
<text x="56.85" y="700.9" font-size="8.6" fill="#555" font-weight="normal" text-anchor="middle" >10.10.</text>
<text x="87.35" y="690.9" font-size="8.6" fill="#555" font-weight="normal" text-anchor="middle" >Fri</text>
<text x="87.35" y="700.9" font-size="8.6" fill="#555" font-weight="normal" text-anchor="middle" >11.10.</text>
<text x="117.85" y="690.9" font-size="8.6" fill="#333" font-weight="bold" text-anchor="middle" >Sat</text>
<text x="117.85" y="700.9" font-size="8.6" fill="#333" font-weight="bold" text-anchor="middle" >12.10.</text>
<text x="148.35" y="690.9" font-size="8.6" fill="#333" font-weight="bold" text-anchor="middle" >Sun</text>
<text x="148.35" y="700.9" font-size="8.6" fill="#333" font-weight="bold" text-anchor="middle" >13.10.</text>
<text x="178.85" y="690.9" font-size="8.6" fill="#555" font-weight="normal" text-anchor="middle" >Mon</text>
<text x="178.85" y="700.9" font-size="8.6" fill="#555" font-weight="normal" text-anchor="middle" >14.10.</text>
<text x="209.35" y="690.9" font-size="8.6" fill="#555" font-weight="normal" text-anchor="middle" >Tue</text>
<text x="209.35" y="700.9" font-size="8.6" fill="#555" font-weight="normal" text-anchor="middle" >15.10.</text>
<text x="239.85" y="690.9" font-size="8.6" fill="#555" font-weight="normal" text-anchor="middle" >Wed</text>
<text x="239.85" y="700.9" font-size="8.6" fill="#555" font-weight="normal" text-anchor="middle" >16.10.</text>
<text x="270.35" y="690.9" font-size="8.6" fill="#555" font-weight="normal" text-anchor="middle" >Thu</text>
<text x="270.35" y="700.9" font-size="8.6" fill="#555" font-weight="normal" text-anchor="middle" >17.10.</text>
<text x="300.85" y="690.9" font-size="8.6" fill="#555" font-weight="normal" text-anchor="middle" >Fri</text>
<text x="300.85" y="700.9" font-size="8.6" fill="#555" font-weight="normal" text-anchor="middle" >18.10.</text>
<text x="331.35" y="690.9" font-size="8.6" fill="#333" font-weight="bold" text-anchor="middle" >Sat</text>
<text x="331.35" y="700.9" font-size="8.6" fill="#333" font-weight="bold" text-anchor="middle" >19.10.</text>
<text x="361.85" y="690.9" font-size="8.6" fill="#333" font-weight="bold" text-anchor="middle" >Sun</text>
<text x="361.85" y="700.9" font-size="8.6" fill="#333" font-weight="bold" text-anchor="middle" >20.10.</text>
<text x="392.35" y="690.9" font-size="8.6" fill="#555" font-weight="normal" text-anchor="middle" >Mon</text>
<text x="392.35" y="700.9" font-size="8.6" fill="#555" font-weight="normal" text-anchor="middle" >21.10.</text>
<text x="422.85" y="690.9" font-size="8.6" fill="#555" font-weight="normal" text-anchor="middle" >Tue</text>
<text x="422.85" y="700.9" font-size="8.6" fill="#555" font-weight="normal" text-anchor="middle" >22.10.</text>
<text x="453.35" y="690.9" font-size="8.6" fill="#555" font-weight="normal" text-anchor="middle" >Wed</text>
<text x="453.35" y="700.9" font-size="8.6" fill="#555" font-weight="normal" text-anchor="middle" >23.10.</text>
<text x="483.85" y="690.9" font-size="8.6" fill="#555" font-weight="normal" text-anchor="middle" >Thu</text>
<text x="483.85" y="700.9" font-size="8.6" fill="#555" font-weight="normal" text-anchor="middle" >24.10.</text>
<text x="514.35" y="690.9" font-size="8.6" fill="#555" font-weight="normal" text-anchor="middle" >Fri</text>
<text x="514.35" y="700.9" font-size="8.6" fill="#555" font-weight="normal" text-anchor="middle" >25.10.</text>
<text x="544.85" y="690.9" font-size="8.6" fill="#333" font-weight="bold" text-anchor="middle" >Sat</text>
<text x="544.85" y="700.9" font-size="8.6" fill="#333" font-weight="bold" text-anchor="middle" >26.10.</text>
<text x="575.35" y="690.9" font-size="8.6" fill="#333" font-weight="bold" text-anchor="middle" >Sun</text>
<text x="575.35" y="700.9" font-size="8.6" fill="#333" font-weight="bold" text-anchor="middle" >27.10.</text>
<text x="605.85" y="690.9" font-size="8.6" fill="#555" font-weight="normal" text-anchor="middle" >Mon</text>
<text x="605.85" y="700.9" font-size="8.6" fill="#555" font-weight="normal" text-anchor="middle" >28.10.</text>
<text x="636.35" y="690.9" font-size="8.6" fill="#555" font-weight="normal" text-anchor="middle" >Tue</text>
<text x="636.35" y="700.9" font-size="8.6" fill="#555" font-weight="normal" text-anchor="middle" >29.10.</text>
<text x="666.85" y="690.9" font-size="8.6" fill="#555" font-weight="normal" text-anchor="middle" >Wed</text>
<text x="666.85" y="700.9" font-size="8.6" fill="#555" font-weight="normal" text-anchor="middle" >30.10.</text>
<text x="697.35" y="690.9" font-size="8.6" fill="#555" font-weight="normal" text-anchor="middle" >Thu</text>
<text x="697.35" y="700.9" font-size="8.6" fill="#555" font-weight="normal" text-anchor="middle" >31.10.</text>
<text x="727.85" y="690.9" font-size="8.6" fill="#555" font-weight="normal" text-anchor="middle" >Fri</text>
<text x="727.85" y="700.9" font-size="8.6" fill="#555" font-weight="normal" text-anchor="middle" >1.11.</text>
<text x="758.35" y="690.9" font-size="8.6" fill="#333" font-weight="bold" text-anchor="middle" >Sat</text>
<text x="758.35" y="700.9" font-size="8.6" fill="#333" font-weight="bold" text-anchor="middle" >2.11.</text>
<text x="788.85" y="690.9" font-size="8.6" fill="#333" font-weight="bold" text-anchor="middle" >Sun</text>
<text x="788.85" y="700.9" font-size="8.6" fill="#333" font-weight="bold" text-anchor="middle" >3.11.</text>
<text x="819.35" y="690.9" font-size="8.6" fill="#555" font-weight="normal" text-anchor="middle" >Mon</text>
<text x="819.35" y="700.9" font-size="8.6" fill="#555" font-weight="normal" text-anchor="middle" >4.11.</text>
<text x="849.85" y="690.9" font-size="8.6" fill="#555" font-weight="normal" text-anchor="middle" >Tue</text>
<text x="849.85" y="700.9" font-size="8.6" fill="#555" font-weight="normal" text-anchor="middle" >5.11.</text>
<text x="880.35" y="690.9" font-size="8.6" fill="#555" font-weight="normal" text-anchor="middle" >Wed</text>
<text x="880.35" y="700.9" font-size="8.6" fill="#555" font-weight="normal" text-anchor="middle" >6.11.</text>
<text x="910.85" y="690.9" font-size="8.6" fill="#d0021b" font-weight="normal" text-anchor="middle" >Thu</text>
<text x="910.85" y="700.9" font-size="8.6" fill="#d0021b" font-weight="normal" text-anchor="middle" >7.11.</text>
<text x="941.35" y="690.9" font-size="8.6" fill="#555" font-weight="normal" text-anchor="middle" >Fri</text>
<text x="941.35" y="700.9" font-size="8.6" fill="#555" font-weight="normal" text-anchor="middle" >8.11.</text>
<text x="971.85" y="690.9" font-size="8.6" fill="#333" font-weight="bold" text-anchor="middle" >Sat</text>
<text x="971.85" y="700.9" font-size="8.6" fill="#333" font-weight="bold" text-anchor="middle" >9.11.</text>
<g class="annot" fill="none" stroke="#9162c9" stroke-width="2.3"><path d="M199.5,40.6 C199.5,29.575000000000003 214.411,23.1 239.8,23.1 C265.189,23.1 280.1,29.575000000000003 280.1,40.6 C280.1,51.625 265.189,58.1 239.8,58.1 C214.411,58.1 199.5,51.625 199.5,40.6 Z"/><path d="M276.9,48.8 C278.4,49.4 281.8,51.8 285.7,52.7 C289.6,53.6 290.6,54.2 300,54.3 C309.4,54.3 328.7,53.7 342,53 C355.3,52.3 370.3,50.4 380,50 C389.7,49.6 391.3,49.8 400,50.4 C408.7,51.0 423.2,52.1 432,53.6 C440.8,55.1 447.5,57.1 452.8,59.2 C458.1,61.3 461.1,64.0 464,66.4 C466.9,68.8 469.3,72.4 470.4,73.6"/><path d="M470.0,73.45 C470.0,63.010000000000005 486.64000000000004,56.050000000000004 511.6,56.050000000000004 C536.5600000000001,56.050000000000004 553.2,63.010000000000005 553.2,73.45 C553.2,83.89 536.5600000000001,90.85 511.6,90.85 C486.64000000000004,90.85 470.0,83.89 470.0,73.45 Z"/></g>

</svg>
</body></html>
